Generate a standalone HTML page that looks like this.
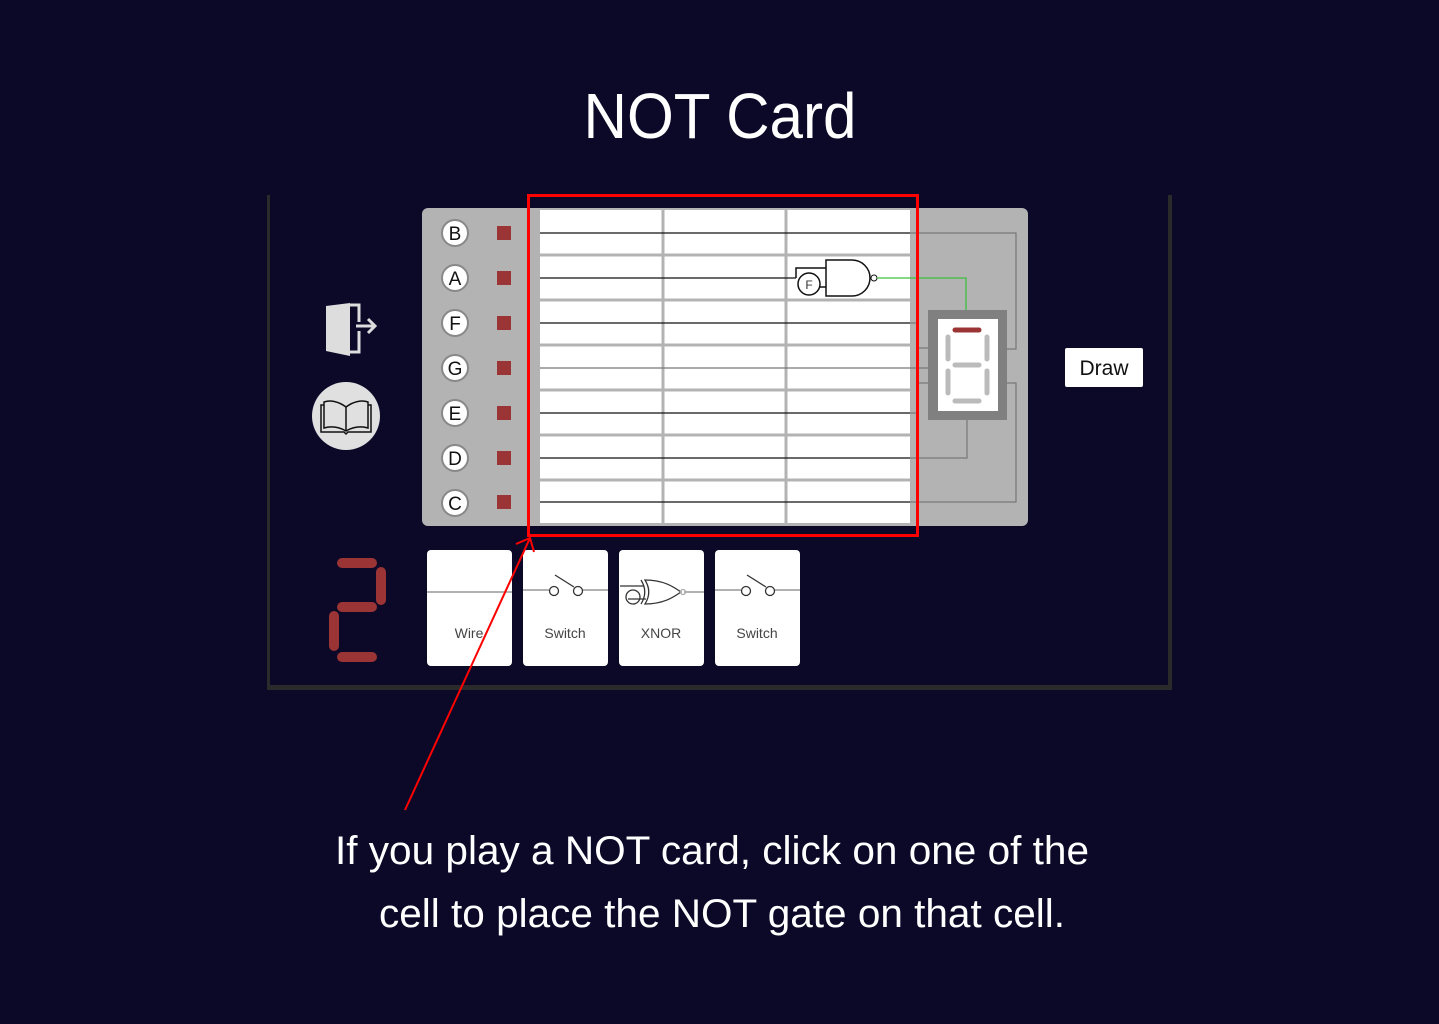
<!DOCTYPE html>
<html><head><meta charset="utf-8"><style>
html,body{margin:0;padding:0;background:#0b0828;}
svg{display:block;}
</style></head><body>
<svg width="1439" height="1024" viewBox="0 0 1439 1024" xmlns="http://www.w3.org/2000/svg" font-family="Liberation Sans, sans-serif">
<rect width="1439" height="1024" fill="#0b0828"/>
<text x="720" y="138" fill="#fff" font-size="64" text-anchor="middle" textLength="273" lengthAdjust="spacingAndGlyphs">NOT Card</text>

<!-- frame -->
<rect x="267" y="195" width="3" height="495" fill="#2a2a2a"/>
<rect x="1168" y="195" width="4" height="495" fill="#2a2a2a"/>
<rect x="267" y="685" width="905" height="5" fill="#2a2a2a"/>

<!-- panel -->
<rect x="422" y="208" width="606" height="318" rx="6" fill="#b3b3b3"/>
<rect x="540" y="210" width="370" height="313" fill="#fff"/>
<g stroke="#b3b3b3" stroke-width="3">
<line x1="540" y1="255" x2="910" y2="255"/><line x1="540" y1="300" x2="910" y2="300"/>
<line x1="540" y1="345" x2="910" y2="345"/><line x1="540" y1="390" x2="910" y2="390"/>
<line x1="540" y1="435" x2="910" y2="435"/><line x1="540" y1="480" x2="910" y2="480"/>
<line x1="663" y1="210" x2="663" y2="523"/><line x1="786" y1="210" x2="786" y2="523"/>
</g>
<g stroke="#111" stroke-width="1.3">
<line x1="540" y1="233" x2="910" y2="233"/>
<line x1="540" y1="278" x2="796" y2="278"/>
<line x1="540" y1="323" x2="910" y2="323"/>
<line x1="540" y1="368" x2="910" y2="368" stroke="#777"/>
<line x1="540" y1="413" x2="910" y2="413"/>
<line x1="540" y1="458" x2="910" y2="458"/>
<line x1="540" y1="502" x2="910" y2="502"/>
</g>
<!-- wires to display -->
<g stroke="#777" stroke-width="1.2" fill="none">
<polyline points="910,233 1016,233 1016,349 1007,349"/>
<polyline points="910,323 918,323 918,348 928,348"/>
<line x1="910" y1="368" x2="928" y2="368"/>
<polyline points="928,383 918,383 918,413 910,413"/>
<polyline points="910,458 967,458 967,420"/>
<polyline points="910,502 1016,502 1016,383 1007,383"/>
</g>
<!-- NAND gate -->
<g stroke="#111" stroke-width="1.5" fill="#fff">
<polyline points="796,278 796,268 826,268" fill="none"/>
<line x1="820" y1="287" x2="826" y2="287"/>
<path d="M826,260 H852 A18,18 0 0 1 852,296 H826 Z"/>
<circle cx="809" cy="284" r="11"/>
<circle cx="874" cy="278" r="3" stroke-width="1"/>
</g>
<text x="809" y="289" font-size="12" fill="#333" text-anchor="middle">F</text>
<polyline points="877,278 966,278 966,310" stroke="#3fbf3f" stroke-width="1.3" fill="none"/>
<!-- display -->
<rect x="928" y="310" width="79" height="110" fill="#808080"/>
<rect x="938" y="319" width="60" height="92" fill="#fff"/>
<g stroke-linecap="round" stroke-width="5" stroke="#bbb">
<line x1="955" y1="330" x2="979" y2="330" stroke="#9b3535"/>
<line x1="948" y1="337" x2="948" y2="359"/><line x1="987" y1="337" x2="987" y2="359"/>
<line x1="955" y1="365" x2="979" y2="365"/>
<line x1="948" y1="371" x2="948" y2="393"/><line x1="987" y1="371" x2="987" y2="393"/>
<line x1="955" y1="401" x2="979" y2="401"/>
</g>
<!-- labels -->
<g font-size="19" text-anchor="middle" fill="#111">
<g stroke="#888" stroke-width="2" fill="#fff">
<circle cx="455" cy="233" r="13"/><circle cx="455" cy="278" r="13"/><circle cx="455" cy="323" r="13"/>
<circle cx="455" cy="368" r="13"/><circle cx="455" cy="413" r="13"/><circle cx="455" cy="458" r="13"/><circle cx="455" cy="503" r="13"/>
</g>
<text x="455" y="240">B</text><text x="455" y="285">A</text><text x="455" y="330">F</text>
<text x="455" y="375">G</text><text x="455" y="420">E</text><text x="455" y="465">D</text><text x="455" y="510">C</text>
</g>
<g fill="#9b3535">
<rect x="497" y="226" width="14" height="14"/><rect x="497" y="271" width="14" height="14"/>
<rect x="497" y="316" width="14" height="14"/><rect x="497" y="361" width="14" height="14"/>
<rect x="497" y="406" width="14" height="14"/><rect x="497" y="451" width="14" height="14"/>
<rect x="497" y="495" width="14" height="14"/>
</g>

<!-- exit icon -->
<path d="M326,306 L350,303 L350,356 L326,351 Z" fill="#ddd"/>
<path d="M350,305 H359 V322 M359,331 V352 H350" stroke="#ddd" stroke-width="3" fill="none"/>
<path d="M356,326 H374 M368,319 L375,326 L368,333" stroke="#ddd" stroke-width="3" fill="none"/>
<!-- book -->
<circle cx="346" cy="416" r="34" fill="#e0e0e0"/>
<g stroke="#111" stroke-width="1.5" fill="none">
<path d="M346,407 C338,401 330,400 324,402 V428 C331,426 339,427 346,431 C353,427 361,426 368,428 V402 C362,400 354,401 346,407 Z"/>
<line x1="346" y1="407" x2="346" y2="431"/>
<path d="M324,405 H321 V432 H344 L346,434 L348,432 H371 V405 H368"/>
</g>

<!-- red digit 2 -->
<g stroke="#9b3535" stroke-width="10" stroke-linecap="round">
<line x1="342" y1="563" x2="372" y2="563"/>
<line x1="381" y1="572" x2="381" y2="600"/>
<line x1="342" y1="607" x2="372" y2="607"/>
<line x1="334" y1="616" x2="334" y2="646"/>
<line x1="342" y1="657" x2="372" y2="657"/>
</g>

<!-- cards -->
<g fill="#fff">
<rect x="427" y="550" width="85" height="116" rx="4"/><rect x="523" y="550" width="85" height="116" rx="4"/>
<rect x="619" y="550" width="85" height="116" rx="4"/><rect x="715" y="550" width="85" height="116" rx="4"/>
</g>
<g stroke="#999" stroke-width="1.5">
<line x1="427" y1="592" x2="512" y2="592"/>
<line x1="523" y1="590" x2="549" y2="590"/><line x1="582" y1="590" x2="608" y2="590"/>
<line x1="684" y1="592" x2="704" y2="592"/>
<line x1="715" y1="590" x2="741" y2="590"/><line x1="774" y1="590" x2="800" y2="590"/>
</g>
<g stroke="#333" stroke-width="1.3" fill="none">
<circle cx="554" cy="591" r="4.5"/><circle cx="578" cy="591" r="4.5"/><line x1="555" y1="575" x2="574" y2="587"/>
<circle cx="746" cy="591" r="4.5"/><circle cx="770" cy="591" r="4.5"/><line x1="747" y1="575" x2="766" y2="587"/>
<path d="M620,586 H644 M628,599 H646"/>
<circle cx="633" cy="597" r="7"/>
<path d="M645,580 C665,580 675,588 681,592 C675,596 665,604 645,604 C650,596 650,588 645,580 Z"/>
<path d="M641,580 C646,588 646,596 641,604"/>
<circle cx="683" cy="592" r="2.5" stroke="#aaa"/>
</g>
<g font-size="14" fill="#444" text-anchor="middle">
<text x="469" y="638">Wire</text><text x="565" y="638">Switch</text>
<text x="661" y="638">XNOR</text><text x="757" y="638">Switch</text>
</g>

<!-- draw button -->
<rect x="1065" y="348" width="78" height="39" rx="2" fill="#fff"/>
<text x="1104" y="375" font-size="21" fill="#111" text-anchor="middle">Draw</text>

<!-- red highlight and arrow -->
<rect x="528.5" y="195.5" width="389" height="340" fill="none" stroke="#f00" stroke-width="3"/>
<line x1="405" y1="810" x2="530" y2="538" stroke="#f00" stroke-width="2"/>
<polyline points="516,544 530,538 534,552" stroke="#f00" stroke-width="2" fill="none"/>

<g fill="#fff" font-size="40">
<text x="335" y="864" textLength="754" lengthAdjust="spacingAndGlyphs">If you play a NOT card, click on one of the</text>
<text x="379" y="927" textLength="686" lengthAdjust="spacingAndGlyphs">cell to place the NOT gate on that cell.</text>
</g>
</svg>
</body></html>
